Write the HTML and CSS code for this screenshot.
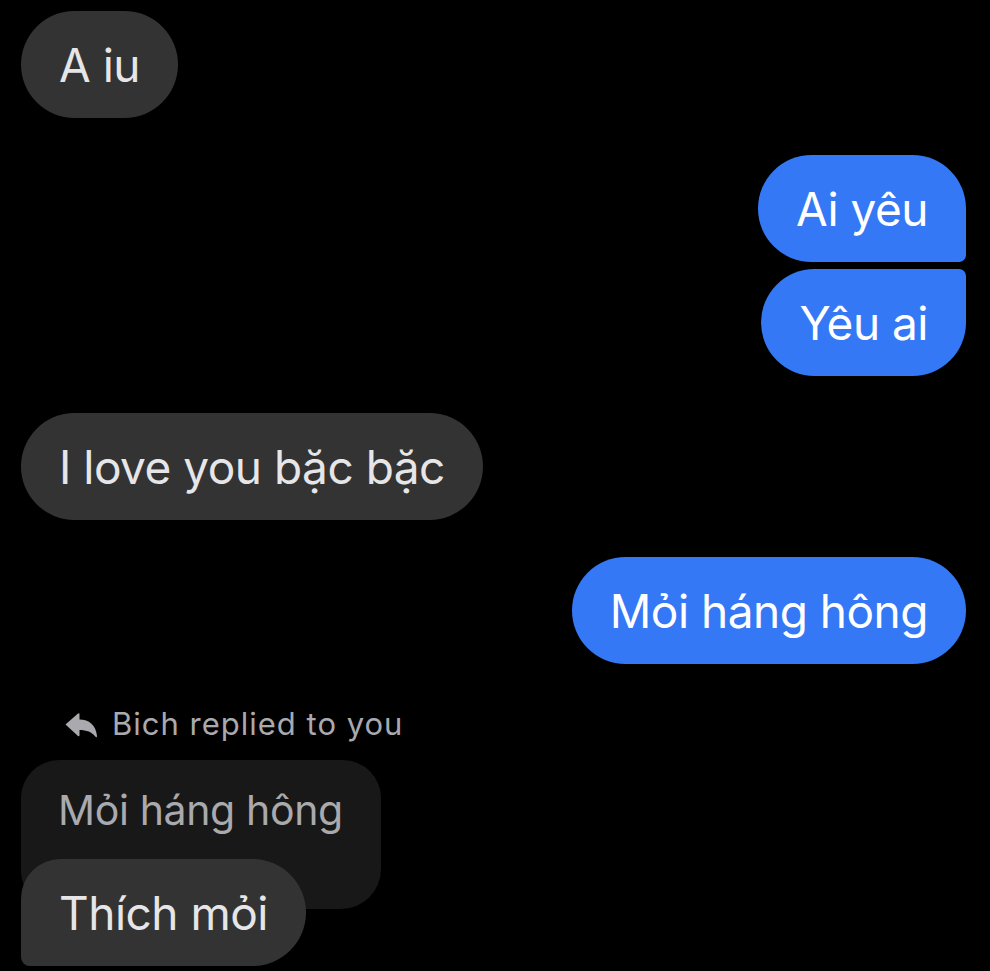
FILE: index.html
```html
<!DOCTYPE html>
<html lang="vi">
<head>
<meta charset="utf-8">
<title>Chat</title>
<link rel="stylesheet" href="styles.css">
</head>
<body>
<div class="thread">
  <div class="row in"><div class="bubble gray">A iu</div></div>
  <div class="row out gap-lg"><div class="bubble blue first">Ai yêu</div></div>
  <div class="row out gap-sm"><div class="bubble blue last">Yêu ai</div></div>
  <div class="row in gap-lg"><div class="bubble gray">I love you bặc bặc</div></div>
  <div class="row out gap-lg"><div class="bubble blue">Mỏi háng hông</div></div>
  <div class="reply-head">
    <svg class="reply-icon" viewBox="0 0 32 26" width="32" height="26" aria-hidden="true">
      <path d="M0.5 12.5 L13 1.5 Q14.5 0.5 14.5 2.5 V7.5 C24 7.5 31 13 32 24 C32 25.5 31 25.5 30.3 24.6 C27 20 21.5 18 14.5 18 V23 Q14.5 25 13 24 Z" fill="#a9a9ae"/>
    </svg>
    <span>Bich replied to you</span>
  </div>
  <div class="reply-group">
    <div class="quote">Mỏi háng hông</div>
    <div class="bubble gray reply">Thích mỏi</div>
  </div>
</div>
</body>
</html>
```
FILE: styles.css
```css
html, body {
  margin: 0;
  padding: 0;
  background: #000;
}
body {
  font-family: Inter, "Noto Sans", "Liberation Sans", sans-serif;
  width: 990px;
  height: 971px;
  overflow: hidden;
}
.thread {
  display: flex;
  flex-direction: column;
  padding: 11px 24px 0 21px;
}
.row {
  display: flex;
}
.row.in { justify-content: flex-start; }
.row.out { justify-content: flex-end; }
.gap-lg { margin-top: 37px; }
.gap-sm { margin-top: 7px; }
.bubble {
  height: 107px;
  box-sizing: border-box;
  display: flex;
  align-items: center;
  padding: 0 38px;
  font-size: 46px;
  letter-spacing: -0.5px;
  border-radius: 54px;
  white-space: nowrap;
}
.gray {
  background: #333333;
  color: #e6e6e8;
}
.blue {
  background: #3478f6;
  color: #ffffff;
}
.blue.first {
  border-radius: 54px 54px 7px 54px;
}
.blue.last {
  border-radius: 54px 7px 54px 54px;
}
.reply-head {
  display: flex;
  align-items: center;
  height: 44px;
  margin-top: 37px;
  padding-left: 44px;
  gap: 15px;
  color: #a9a9ae;
  font-size: 31px;
  letter-spacing: 1px;
}
.reply-icon {
  display: block;
  margin-top: 3px;
}
.reply-group {
  display: flex;
  flex-direction: column;
  align-items: flex-start;
  margin-top: 15px;
}
.quote {
  background: #181818;
  color: #a9a9ae;
  font-size: 41px;
  letter-spacing: -0.35px;
  height: 149px;
  box-sizing: border-box;
  padding: 0 38px 50px 37px;
  display: flex;
  align-items: center;
  border-radius: 38px 38px 40px 38px;
  white-space: nowrap;
}
.bubble.reply {
  margin-top: -50px;
  border-radius: 40px 54px 54px 9px;
}
```
